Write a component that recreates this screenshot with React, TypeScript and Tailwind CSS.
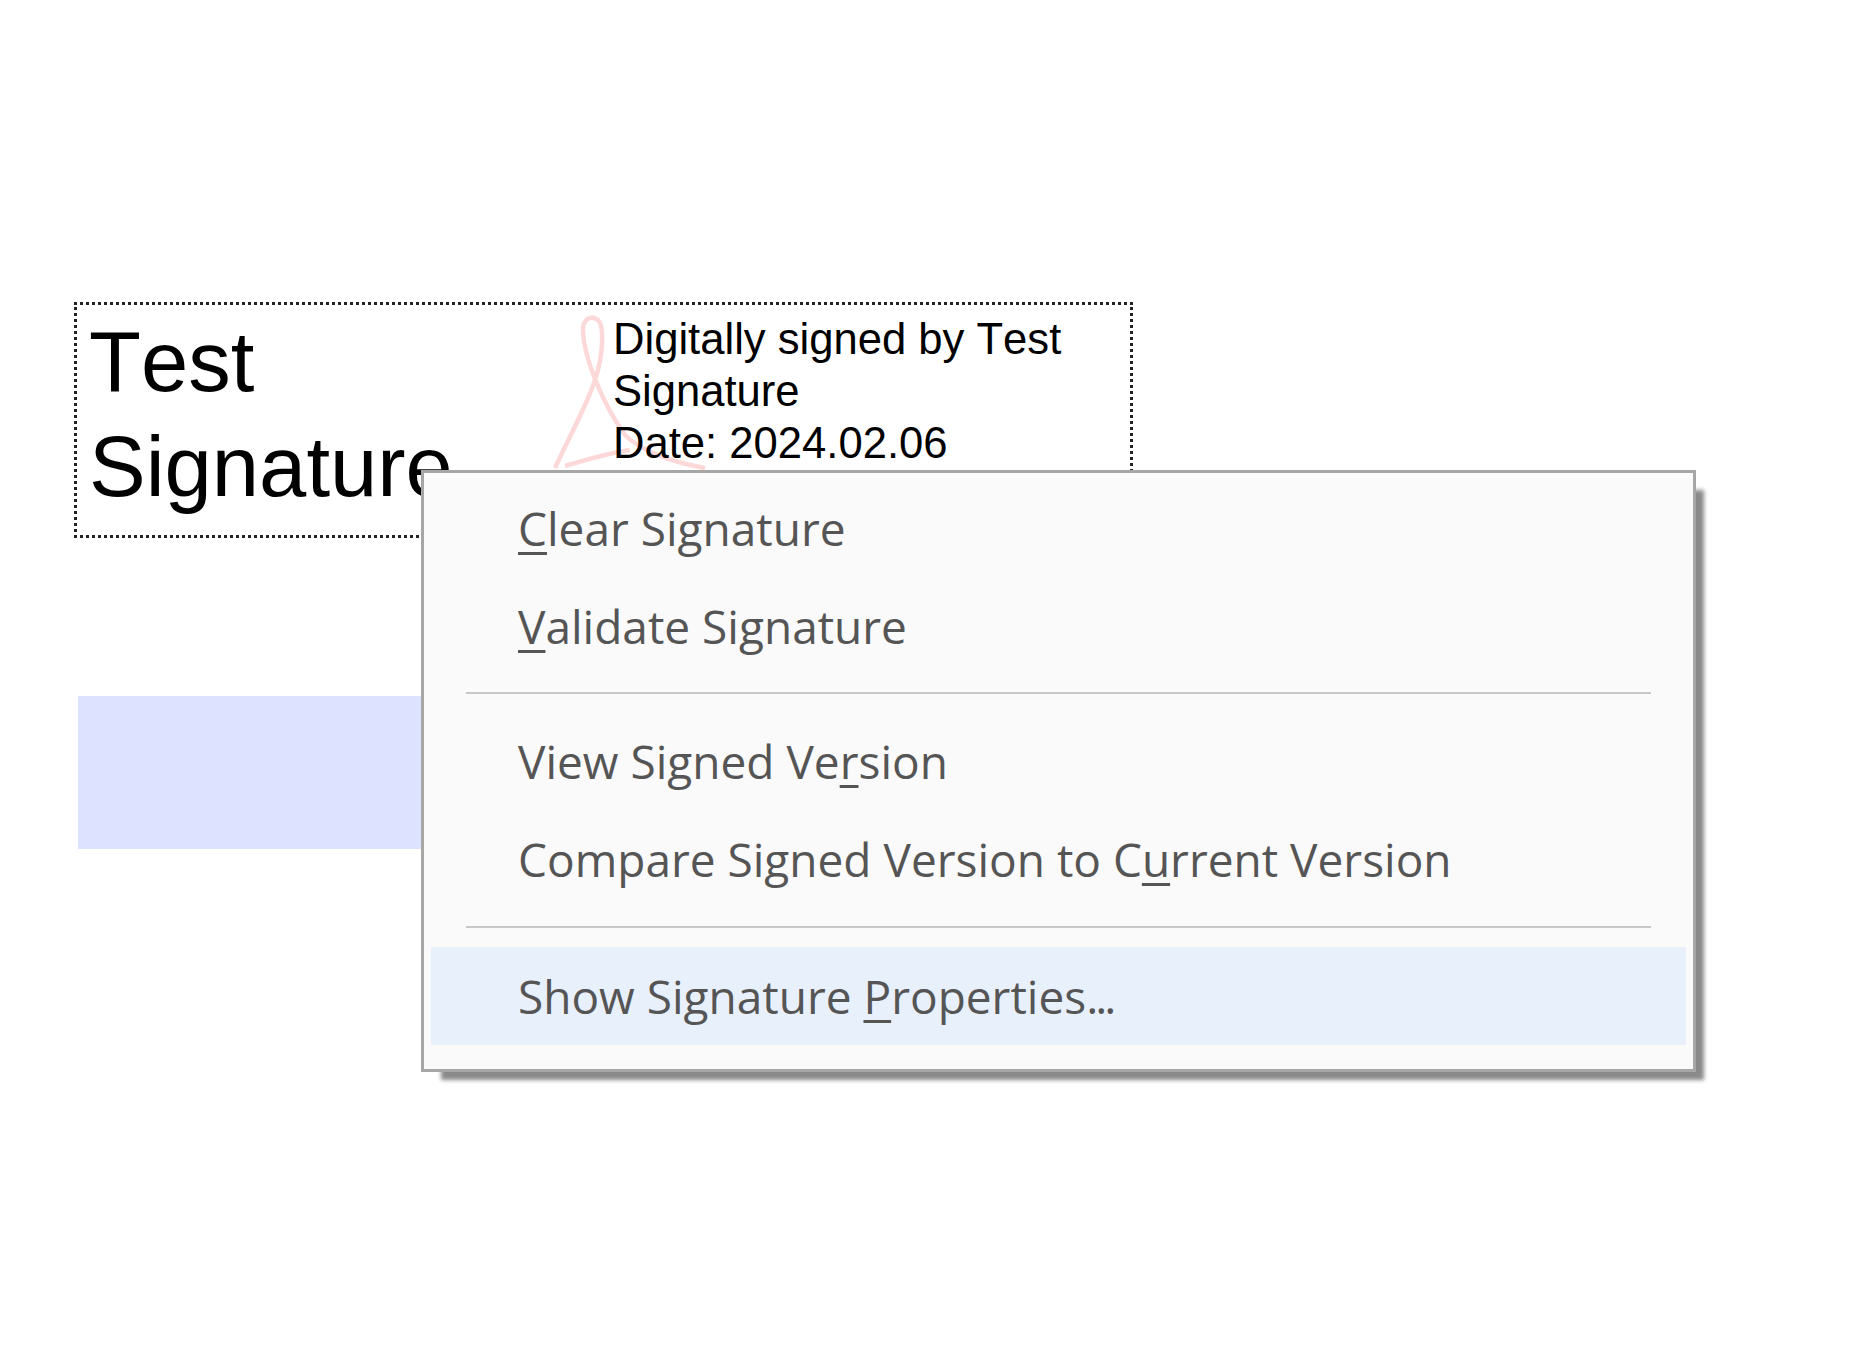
const MENU_FONT = "font-['Open_Sans','Noto_Sans',sans-serif]";

function Key({ children }: { children: string }) {
  return <span className="underline decoration-[3px] underline-offset-[6px]">{children}</span>;
}

function MenuItem({ children, active = false }: { children: React.ReactNode; active?: boolean }) {
  return (
    <div className={`h-[98px] flex items-center pl-[87px] ${active ? 'bg-[#e8f0fb] pb-[1px]' : 'pb-[5px]'}`}>
      <span className={`${MENU_FONT} text-[46px] leading-none text-[#555555] whitespace-nowrap`}>{children}</span>
    </div>
  );
}

function Divider() {
  return <div className="h-[2px] bg-[#c8c8c8] ml-[35px] mr-[35px]" />;
}

function AcrobatMark() {
  return (
    <svg className="absolute left-[-35px] top-[-5px] w-[240px] h-[190px]" viewBox="0 0 240 190" fill="none" stroke="#fdd8d8" strokeWidth="4.5">
      <path d="M25 168 C40 135 60 100 68 70 C73 50 74 25 68 20 C62 15 52 18 53 32 C54 55 70 100 95 135 C110 150 140 162 175 168" />
      <path d="M35 166 C55 160 80 153 100 150" />
    </svg>
  );
}

export default function App() {
  return (
    <div className="relative min-h-[1368px] bg-white pt-[302px] pl-[74px]">
      <div className="w-[1059px] h-[236px] border-[3px] border-dotted border-[#222222] flex font-['Liberation_Sans',Arial,sans-serif] text-black [font-kerning:none]">
        <div className="w-[488px] pl-[12px] pt-[4px] text-[85px] leading-[105px]">Test<br />Signature</div>
        <div className="relative flex-1 pl-[48px] pt-[8px] text-[43.6px] leading-[52px]">
          <AcrobatMark />
          <div className="relative w-[480px]">Digitally signed by Test Signature<br />Date: 2024.02.06</div>
        </div>
      </div>
      <div className="mt-[158px] ml-[4px] w-[500px] h-[153px] bg-[#dde3ff]" />

      <div className="absolute left-[421px] top-[470px] w-[1275px] h-[602px] border-[3px] border-[#a6a6a6] bg-[#fafafa] pt-[8px] px-[7px] shadow-[14px_14px_4px_-6px_#8a8a8a]">
        <MenuItem><Key>C</Key>lear Signature</MenuItem>
        <MenuItem><Key>V</Key>alidate Signature</MenuItem>
        <div className="pt-[15px] pb-[20px]"><Divider /></div>
        <MenuItem>View Signed Ve<Key>r</Key>sion</MenuItem>
        <MenuItem>Compare Signed Version to C<Key>u</Key>rrent Version</MenuItem>
        <div className="pt-[16px] pb-[19px]"><Divider /></div>
        <MenuItem active>Show Signature <Key>P</Key>roperties<span className="tracking-[-3px]">...</span></MenuItem>
      </div>
    </div>
  );
}
